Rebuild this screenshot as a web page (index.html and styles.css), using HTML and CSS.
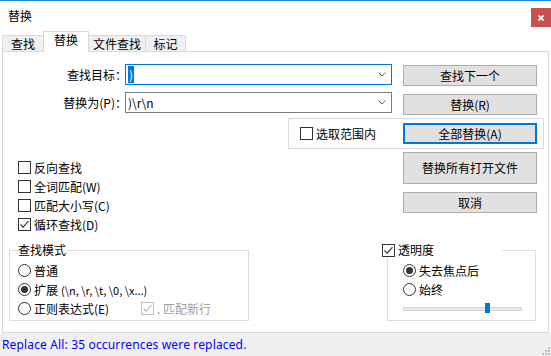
FILE: index.html
```html
<!DOCTYPE html>
<html lang="zh-CN">
<head>
<meta charset="utf-8">
<title>替换</title>
<link rel="stylesheet" href="styles.css">
</head>
<body>
<div class="window">
  <div class="titlebar">
    <span class="title">替换</span>
    <div class="close">
      <svg width="6" height="6" viewBox="0 0 6 6"><path d="M0.5 0.5 L5.5 5.5 M5.5 0.5 L0.5 5.5" stroke="#fff" stroke-width="1.6" fill="none"/></svg>
    </div>
  </div>
  <div class="tabs">
    <div class="tab t1">查找</div>
    <div class="tab t2 active">替换</div>
    <div class="tab t3">文件查找</div>
    <div class="tab t4">标记</div>
  </div>
  <div class="panel">
    <div class="field-row row-find">
      <div class="field-label">查找目标：</div>
      <div class="combo focused">
        <span class="combo-text"><span class="sel">)</span></span>
        <svg class="chev" width="8" height="5" viewBox="0 0 8 5"><path d="M0.5 0.5 L4 4 L7.5 0.5" stroke="#606060" stroke-width="1" fill="none"/></svg>
      </div>
      <div class="btn btn-find">查找下一个</div>
    </div>
    <div class="field-row row-replace">
      <div class="field-label">替换为(P)：</div>
      <div class="combo">
        <span class="combo-text">)\r\n</span>
        <svg class="chev" width="8" height="5" viewBox="0 0 8 5"><path d="M0.5 0.5 L4 4 L7.5 0.5" stroke="#606060" stroke-width="1" fill="none"/></svg>
      </div>
      <div class="btn btn-replace">替换(R)</div>
    </div>
    <div class="scope-box">
      <div class="check scope-check"><span class="box"></span>选取范围内</div>
      <div class="btn btn-focus">全部替换(A)</div>
    </div>
    <div class="mid">
      <div class="options">
        <div class="check"><span class="box"></span>反向查找</div>
        <div class="check"><span class="box"></span>全词匹配(W)</div>
        <div class="check"><span class="box"></span>匹配大小写(C)</div>
        <div class="check"><span class="box checked"><svg width="11" height="11" viewBox="0 0 11 11"><path d="M1.5 5.5 L4.2 8.2 L9.5 2.2" stroke="#333" stroke-width="1.1" fill="none"/></svg></span>循环查找(D)</div>
      </div>
      <div class="mid-buttons">
        <div class="btn btn-tall">替换所有打开文件</div>
        <div class="btn btn-cancel">取消</div>
      </div>
    </div>
    <div class="groups">
      <fieldset class="group mode">
        <legend class="legend">查找模式</legend>
        <div class="radio"><span class="dot"></span>普通</div>
        <div class="radio"><span class="dot on"></span>扩展 <span class="small">(\n, \r, \t, \0, \x...)</span></div>
        <div class="radio-row">
          <div class="radio regex"><span class="dot"></span>正则表达式(E)</div>
          <div class="check disabled"><span class="box"><svg width="11" height="11" viewBox="0 0 11 11"><path d="M1.5 5.5 L4.2 8.2 L9.5 2.2" stroke="#bcbcbc" stroke-width="1.1" fill="none"/></svg></span>. 匹配新行</div>
        </div>
      </fieldset>
      <fieldset class="group trans">
        <legend class="legend trans-legend"><span class="check"><span class="box checked"><svg width="11" height="11" viewBox="0 0 11 11"><path d="M1.5 5.5 L4.2 8.2 L9.5 2.2" stroke="#333" stroke-width="1.1" fill="none"/></svg></span>透明度</span></legend>
        <div class="radio"><span class="dot on"></span>失去焦点后</div>
        <div class="radio"><span class="dot"></span>始终</div>
        <div class="slider">
          <div class="track"></div>
          <div class="thumb"></div>
        </div>
      </fieldset>
    </div>
  </div>
  <div class="statusbar">
    <span class="status-text">Replace All: 35 occurrences were replaced.</span>
    <svg class="grip" width="9" height="9" viewBox="0 0 9 9" fill="#bcbcbc">
      <rect x="7" y="1" width="2" height="2"/>
      <rect x="4" y="4" width="2" height="2"/><rect x="7" y="4" width="2" height="2"/>
      <rect x="1" y="7" width="2" height="2"/><rect x="4" y="7" width="2" height="2"/><rect x="7" y="7" width="2" height="2"/>
    </svg>
  </div>
</div>
</body>
</html>
```
FILE: styles.css
```css
html, body {
  margin: 0;
  padding: 0;
  background: #ffffff;
}
body {
  font-family: "Noto Sans CJK SC", "Noto Sans", sans-serif;
  font-size: 12px;
  color: #000;
}
.window {
  width: 551px;
  height: 356px;
  display: flex;
  flex-direction: column;
  background: #fff;
  overflow: hidden;
}
.titlebar {
  box-sizing: border-box;
  height: 31px;
  border-top: 1px solid #1883d7;
  display: flex;
  align-items: flex-start;
}
.title {
  padding-left: 8px;
  line-height: 30px;
}
.close {
  margin-left: auto;
  margin-top: 7px;
  width: 20px;
  height: 19px;
  background: #c75050;
  display: flex;
  align-items: center;
  justify-content: center;
}
.close svg { display: block; }

.tabs {
  height: 20px;
  display: flex;
  align-items: flex-end;
  padding-left: 2px;
}
.tab {
  box-sizing: border-box;
  height: 16px;
  border: 1px solid #d9d9d9;
  border-bottom: none;
  background: #f0f0f0;
  text-align: center;
  line-height: 15px;
  margin-left: -1px;
}
.tab.t1 { width: 42px; margin-left: 0; }
.tab.t2 { width: 46px; }
.tab.t3 { width: 58px; }
.tab.t4 { width: 41px; }
.tab.active {
  height: 21px;
  margin-bottom: -1px;
  background: #fff;
  position: relative;
  z-index: 1;
  line-height: 16px;
}

.panel {
  box-sizing: border-box;
  margin-left: 2px;
  width: 547px;
  height: 283px;
  border: 1px solid #d9d9d9;
  background: #fff;
}
.field-row {
  display: flex;
  align-items: flex-start;
  height: 21px;
}
.row-find { margin-top: 12px; }
.row-replace { margin-top: 7px; }
.field-label {
  width: 124px;
  margin-right: -2px;
  text-align: right;
  line-height: 21px;
  white-space: nowrap;
}
.combo {
  box-sizing: border-box;
  width: 267px;
  height: 21px;
  border: 1px solid #7a7a7a;
  display: flex;
  align-items: center;
  padding-left: 2px;
  padding-right: 5px;
  background: #fff;
}
.combo.focused { border-color: #0078d7; }
.combo-text {
  flex: 1;
  line-height: 19px;
  white-space: pre;
}
.sel {
  background: #0078d7;
  color: #fff;
  padding: 0 1px;
}
.chev { display: block; }
.btn {
  box-sizing: border-box;
  width: 134px;
  height: 21px;
  background: #e1e1e1;
  border: 1px solid #adadad;
  display: flex;
  align-items: center;
  justify-content: center;
  line-height: 1;
}
.btn-find { margin-left: 11px; margin-top: 1px; }
.btn-replace { margin-left: 11px; margin-top: 2px; }
.btn-focus { border: 2px solid #0078d7; margin-left: auto; margin-right: 6px; }

.scope-box {
  box-sizing: border-box;
  margin-top: 5px;
  margin-left: 285px;
  width: 256px;
  height: 31px;
  border: 1px solid #dcdcdc;
  display: flex;
  align-items: center;
}
.scope-check { margin-left: 11px; }

.check, .radio {
  display: flex;
  align-items: center;
  height: 19px;
  white-space: nowrap;
}
.box {
  box-sizing: border-box;
  width: 13px;
  height: 13px;
  border: 1px solid #333;
  background: #fff;
  margin-right: 3px;
  display: flex;
  align-items: center;
  justify-content: center;
  flex: none;
}
.box svg { display: block; }
.dot {
  box-sizing: border-box;
  width: 13px;
  height: 13px;
  border: 1px solid #333;
  border-radius: 50%;
  background: #fff;
  margin-right: 3px;
  display: flex;
  align-items: center;
  justify-content: center;
  flex: none;
}
.dot.on::after {
  content: "";
  width: 7px;
  height: 7px;
  border-radius: 50%;
  background: #333;
}

.mid {
  display: flex;
  align-items: flex-start;
  margin-top: 3px;
}
.options {
  margin-top: 6px;
  padding-left: 15px;
}
.mid-buttons {
  margin-left: auto;
  margin-right: 11px;
  display: flex;
  flex-direction: column;
}
.btn-tall { height: 32px; }
.btn-cancel { margin-top: 8px; }

.groups {
  display: flex;
  align-items: flex-start;
  margin-top: 8px;
}
.group {
  box-sizing: border-box;
  margin: 0;
  border: 1px solid #dcdcdc;
  padding: 3px 0 2px 8px;
  min-width: 0;
}
.legend {
  padding: 0;
  line-height: 16px;
  height: 16px;
}
.mode {
  margin-left: 6px;
  width: 240px;
}
.radio-row {
  display: flex;
  align-items: center;
}
.regex { width: 123px; }
.small { font-size: 11px; margin-left: 3px; }
.check.disabled { color: #a0a0a0; }
.check.disabled .box { border-color: #bcbcbc; }

.trans {
  margin-left: auto;
  margin-right: 12px;
  width: 149px;
  padding-left: 15px;
}
.trans-legend {
  margin-left: -22px;
  padding-left: 1px;
  width: 121px;
  box-sizing: border-box;
  background: #fff;
}
.trans-legend .check { height: 16px; }
.slider {
  position: relative;
  height: 19px;
  width: 119px;
  display: flex;
  align-items: center;
}
.track {
  box-sizing: border-box;
  width: 119px;
  height: 4px;
  background: #e7eaea;
  border: 1px solid #d6d6d6;
}
.thumb {
  position: absolute;
  left: 82px;
  top: 4px;
  width: 5px;
  height: 10px;
  background: #0078d7;
}

.statusbar {
  position: relative;
  flex: 1;
  background: #f0f0f0;
  padding-left: 2px;
  line-height: 22px;
}
.status-text {
  font-family: "Noto Sans", sans-serif;
  font-size: 12px;
  letter-spacing: 0.15px;
  color: #0000ff;
}
.grip {
  position: absolute;
  right: 1px;
  bottom: 1px;
  display: block;
}
```
